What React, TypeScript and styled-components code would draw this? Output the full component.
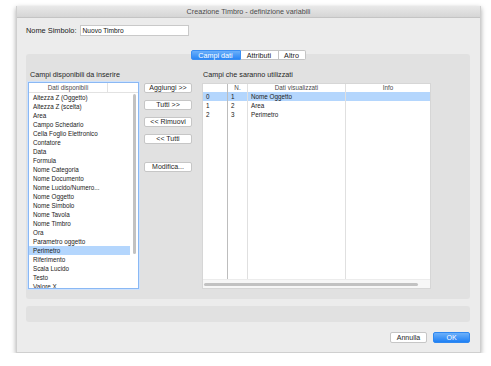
import React from 'react'
import styled, { createGlobalStyle } from 'styled-components'

const GlobalStyle = createGlobalStyle`
  html, body {
    margin: 0;
    padding: 0;
    background: #ffffff;
    font-family: "Liberation Sans", Arial, sans-serif;
  }
`

const Window = styled.div`
  box-sizing: border-box;
  width: 465px;
  height: 347px;
  margin: 6px 0 0 16px;
  background: #ececec;
  border: 1px solid #cfcfcf;
  border-top: none;
  box-shadow: 0 2px 5px rgba(0, 0, 0, 0.35);
  display: flex;
  flex-direction: column;
`
const TitleBar = styled.div`
  height: 11px;
  flex: none;
  background: linear-gradient(#e9e9e9, #d5d5d5);
  border-bottom: 1px solid #c4c4c4;
  font-size: 7.2px;
  line-height: 11px;
  text-align: center;
  color: #4b4b4b;
`
const Body = styled.div`
  padding: 7px 10px 0 9px;
  display: flex;
  flex-direction: column;
`
const NameRow = styled.div`
  display: flex;
  align-items: center;
  height: 11px;
  gap: 3px;
`
const Label = styled.span`
  font-size: 7.4px;
  color: #1a1a1a;
  white-space: nowrap;
`
const TextInput = styled.div`
  box-sizing: border-box;
  width: 109px;
  height: 11px;
  background: #fff;
  border: 1px solid #c9c9c9;
  font-size: 6.6px;
  line-height: 9px;
  padding-left: 2px;
  color: #111;
`
const TabRow = styled.div`
  display: flex;
  justify-content: center;
  margin: 14px 0 -6px;
  position: relative;
  z-index: 1;
`
const Tab = styled.div<{ $active?: boolean; $w: number }>`
  box-sizing: border-box;
  width: ${({ $w }) => $w}px;
  height: 10px;
  font-size: 7.2px;
  line-height: 9px;
  text-align: center;
  color: ${({ $active }) => ($active ? '#fff' : '#1a1a1a')};
  background: ${({ $active }) =>
    $active ? 'linear-gradient(#6cb0fa, #2a86f5)' : '#fff'};
  border: 1px solid ${({ $active }) => ($active ? '#3a8ef2' : '#c4c4c4')};
  border-left: ${({ $active }) => ($active ? '1px solid #3a8ef2' : 'none')};
  &:first-child {
    border-radius: 2px 0 0 2px;
  }
  &:last-child {
    border-radius: 0 2px 2px 0;
  }
`
const Panel = styled.div`
  box-sizing: border-box;
  height: 245px;
  background: #e1e1e1;
  border-radius: 3px;
  padding: 16px 0 0 2px;
  display: flex;
`
const LeftCol = styled.div`
  width: 111px;
  display: flex;
  flex-direction: column;
`
const Heading = styled.div`
  font-size: 7.2px;
  line-height: 9px;
  height: 9px;
  margin: 0 0 3px 2px;
  color: #262626;
  white-space: nowrap;
`
const ListBox = styled.div`
  box-sizing: border-box;
  height: 207px;
  background: #fff;
  border: 1px solid #8ab8f4;
  box-shadow: 0 0 0 1px #cfe2fb;
  display: flex;
  flex-direction: column;
  overflow: hidden;
`
const ListHeader = styled.div`
  display: flex;
  height: 9px;
  flex: none;
  border-bottom: 1px solid #e2e2e2;
`
const HeadCell = styled.div<{ $w?: number }>`
  ${({ $w }) => ($w ? `width: ${$w}px;` : 'flex: 1;')}
  font-size: 6.3px;
  line-height: 9px;
  text-align: center;
  color: #4a4a4a;
  & + & {
    border-left: 1px solid #e2e2e2;
  }
`
const ListBody = styled.div`
  display: flex;
  flex: 1;
  min-height: 0;
`
const Items = styled.div`
  flex: 1;
  display: flex;
  flex-direction: column;
`
const Item = styled.div<{ $selected?: boolean }>`
  height: 9px;
  flex: none;
  font-size: 6.3px;
  line-height: 9px;
  padding-left: 4px;
  color: #1a1a1a;
  white-space: nowrap;
  background: ${({ $selected }) => ($selected ? '#b4d6fd' : 'transparent')};
`
const VTrack = styled.div`
  width: 8px;
  display: flex;
  justify-content: center;
  padding-top: 1px;
`
const VThumb = styled.div`
  width: 3px;
  height: 160px;
  border-radius: 2px;
  background: #c2c2c2;
`
const ButtonCol = styled.div`
  width: 48px;
  margin: 13px 0 0 5px;
  display: flex;
  flex-direction: column;
  gap: 7px;
`
const Button = styled.div<{ $gapTop?: number; $primary?: boolean; $w?: number; $h?: number }>`
  box-sizing: border-box;
  height: ${({ $h }) => $h ?? 10}px;
  ${({ $w }) => ($w ? `width: ${$w}px;` : '')}
  margin-top: ${({ $gapTop }) => $gapTop ?? 0}px;
  font-size: 7px;
  line-height: ${({ $h }) => ($h ?? 10) - 2}px;
  text-align: center;
  border-radius: 2px;
  color: ${({ $primary }) => ($primary ? '#fff' : '#262626')};
  background: ${({ $primary }) =>
    $primary ? 'linear-gradient(#6cb0fa, #1f80f4)' : '#fff'};
  border: 1px solid ${({ $primary }) => ($primary ? '#2f88f0' : '#c6c6c6')};
  white-space: nowrap;
`
const RightCol = styled.div`
  margin-left: 9px;
  display: flex;
  flex-direction: column;
`
const Table = styled.div`
  box-sizing: border-box;
  width: 229px;
  height: 206px;
  margin: 1px 0 0 1px;
  background: #fff;
  border: 1px solid #d6d6d6;
  display: flex;
  flex-direction: column;
`
const Grid = styled.div`
  flex: 1;
  display: grid;
  grid-template-columns: 25px 20px 98px 1fr;
  grid-template-rows: 8px 9px 9px 9px 1fr;
`
const Cell = styled.div<{ $head?: boolean; $sel?: boolean; $dark?: boolean; $center?: boolean }>`
  font-size: 6.3px;
  line-height: ${({ $head }) => ($head ? 8 : 9)}px;
  text-align: ${({ $center }) => ($center ? 'center' : 'left')};
  padding-left: ${({ $center }) => ($center ? 0 : 3)}px;
  color: ${({ $head }) => ($head ? '#4a4a4a' : '#1a1a1a')};
  background: ${({ $sel }) => ($sel ? '#b4d6fd' : 'transparent')};
  border-right: 1px solid ${({ $dark }) => ($dark ? '#bdbdbd' : '#e0e0e0')};
  white-space: nowrap;
  overflow: hidden;
  &:nth-child(4n) {
    border-right: none;
  }
`
const HTrack = styled.div`
  height: 8px;
  flex: none;
  background: #f7f7f7;
  border-top: 1px solid #ececec;
  display: flex;
  align-items: center;
  padding: 0 12px 0 1px;
`
const HThumb = styled.div`
  flex: 1;
  height: 3px;
  border-radius: 2px;
  background: #c2c2c2;
`
const StatusBox = styled.div`
  height: 16px;
  margin-top: 7px;
  background: #e1e1e1;
  border-radius: 3px;
`
const Footer = styled.div`
  display: flex;
  justify-content: flex-end;
  gap: 6px;
  margin-top: 10px;
`

const available = [
  'Altezza Z (Oggetto)',
  'Altezza Z (scelta)',
  'Area',
  'Campo Schedario',
  'Cella Foglio Elettronico',
  'Contatore',
  'Data',
  'Formula',
  'Nome Categoria',
  'Nome Documento',
  'Nome Lucido/Numero...',
  'Nome Oggetto',
  'Nome Simbolo',
  'Nome Tavola',
  'Nome Timbro',
  'Ora',
  'Parametro oggetto',
  'Perimetro',
  'Riferimento',
  'Scala Lucido',
  'Testo',
  'Valore X',
]

const used = [
  ['0', '1', 'Nome Oggetto'],
  ['1', '2', 'Area'],
  ['2', '3', 'Perimetro'],
]

function App() {
  return (
    <>
      <GlobalStyle />
      <Window>
        <TitleBar>Creazione Timbro - definizione variabili</TitleBar>
        <Body>
          <NameRow>
            <Label>Nome Simbolo:</Label>
            <TextInput>Nuovo Timbro</TextInput>
          </NameRow>

          <TabRow>
            <Tab $active $w={50}>Campi dati</Tab>
            <Tab $w={38}>Attributi</Tab>
            <Tab $w={27}>Altro</Tab>
          </TabRow>

          <Panel>
            <LeftCol>
              <Heading>Campi disponibili da inserire</Heading>
              <ListBox>
                <ListHeader>
                  <HeadCell>Dati disponibili</HeadCell>
                  <HeadCell $w={30} />
                </ListHeader>
                <ListBody>
                  <Items>
                    {available.map((name) => (
                      <Item key={name} $selected={name === 'Perimetro'}>
                        {name}
                      </Item>
                    ))}
                  </Items>
                  <VTrack>
                    <VThumb />
                  </VTrack>
                </ListBody>
              </ListBox>
            </LeftCol>

            <ButtonCol>
              <Button>Aggiungi &gt;&gt;</Button>
              <Button>Tutti &gt;&gt;</Button>
              <Button>&lt;&lt; Rimuovi</Button>
              <Button>&lt;&lt; Tutti</Button>
              <Button $gapTop={11}>Modifica...</Button>
            </ButtonCol>

            <RightCol>
              <Heading>Campi che saranno utilizzati</Heading>
              <Table>
                <Grid>
                  <Cell $head $dark />
                  <Cell $head $center>N.</Cell>
                  <Cell $head $center>Dati visualizzati</Cell>
                  <Cell $head $center>Info</Cell>
                  {used.map((row, i) => (
                    <React.Fragment key={row[0]}>
                      <Cell $sel={i === 0} $dark>{row[0]}</Cell>
                      <Cell $sel={i === 0}>{row[1]}</Cell>
                      <Cell $sel={i === 0}>{row[2]}</Cell>
                      <Cell $sel={i === 0} />
                    </React.Fragment>
                  ))}
                  <Cell $dark />
                  <Cell />
                  <Cell />
                  <Cell />
                </Grid>
                <HTrack>
                  <HThumb />
                </HTrack>
              </Table>
            </RightCol>
          </Panel>

          <StatusBox />

          <Footer>
            <Button $w={37} $h={11}>Annulla</Button>
            <Button $w={37} $h={11} $primary>OK</Button>
          </Footer>
        </Body>
      </Window>
    </>
  )
}

export default App
